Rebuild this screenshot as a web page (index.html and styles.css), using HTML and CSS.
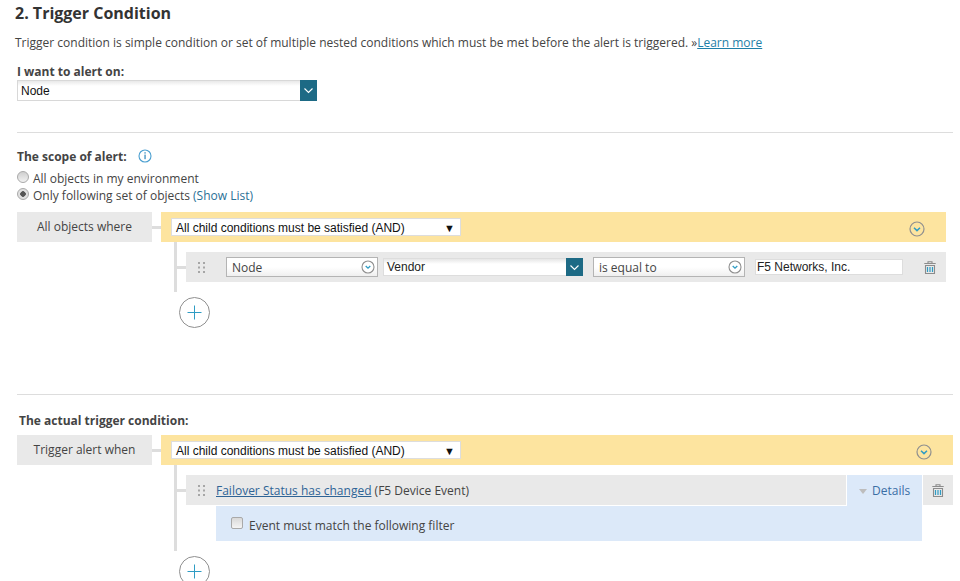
FILE: index.html
```html
<!DOCTYPE html>
<html lang="en">
<head>
<meta charset="utf-8">
<title>Trigger Condition</title>
<link rel="stylesheet" href="styles.css">
</head>
<body>
<main class="page">
  <h2 class="title">2. Trigger Condition</h2>
  <p class="intro">Trigger condition is simple condition or set of multiple nested conditions which must be met before the alert is triggered. »<a class="link" href="#">Learn more</a></p>

  <div class="label label-alert">I want to alert on:</div>
  <div class="alert-select">
    <div class="alert-value">Node</div>
    <div class="drop-btn drop-btn-alert"><svg width="11" height="7" viewBox="0 0 11 7"><path d="M1.5 1.5 5.5 5.5 9.5 1.5" fill="none" stroke="#fff" stroke-width="1.1"/></svg></div>
  </div>

  <hr class="rule rule-first">

  <div class="label label-scope">The scope of alert:
    <svg class="info" width="14" height="14" viewBox="0 0 14 14"><circle cx="7" cy="7" r="6" fill="none" stroke="#4a9fd0" stroke-width="1.1"/><rect x="6.4" y="3.2" width="1.3" height="1.4" fill="#3b8fc0"/><rect x="6.4" y="5.6" width="1.3" height="4.6" fill="#3b8fc0"/></svg>
  </div>
  <label class="radio-row radio-first"><input class="radio" type="radio" name="scope">All objects in my environment</label>
  <label class="radio-row"><input class="radio" type="radio" name="scope" checked>Only following set of objects <a class="show-list" href="#">(Show List)</a></label>

  <section class="group group-narrow">
    <div class="head">
      <div class="head-label">All objects where</div>
      <div class="head-link"></div>
      <div class="head-bar">
        <div class="and-select"><span>All child conditions must be satisfied (AND)</span><span class="and-arrow">▼</span></div>
        <svg class="bar-chevron" width="16" height="16" viewBox="0 0 16 16"><circle cx="8" cy="8" r="7" fill="none" stroke="#8f8f8f" stroke-width="1.2"/><path d="M5 6.8 8 9.6 11 6.8" fill="none" stroke="#2f9cc4" stroke-width="1.5"/></svg>
      </div>
    </div>
    <div class="tree">
      <div class="tree-row cond-row">
        <svg class="handle" width="7" height="11" viewBox="0 0 7 11"><path d="M0 0h2v2H0zM5 0h2v2H5zM0 4.500h2v2H0zM5 4.500h2v2H5zM0 9h2v2H0zM5 9h2v2H5z" fill="#a6a6a6"/></svg>
        <div class="fancy-select fancy-first"><span>Node</span><svg width="14" height="14" viewBox="0 0 14 14"><circle cx="7" cy="7" r="6" fill="#fff" stroke="#8f8f8f" stroke-width="1.1"/><path d="M4.700 6 7 8.200 9.300 6" fill="none" stroke="#2f9cc4" stroke-width="1.3"/></svg></div>
        <div class="vendor-select">
          <div class="vendor-value">Vendor</div>
          <div class="drop-btn drop-btn-vendor"><svg width="11" height="7" viewBox="0 0 11 7"><path d="M1.500 1.500 5.500 5.500 9.500 1.500" fill="none" stroke="#fff" stroke-width="1.1"/></svg></div>
        </div>
        <div class="fancy-select fancy-op"><span>is equal to</span><svg width="14" height="14" viewBox="0 0 14 14"><circle cx="7" cy="7" r="6" fill="#fff" stroke="#8f8f8f" stroke-width="1.1"/><path d="M4.700 6 7 8.200 9.300 6" fill="none" stroke="#2f9cc4" stroke-width="1.3"/></svg></div>
        <input class="value-input" type="text" value="F5 Networks, Inc.">
        <svg class="trash trash-row" width="12" height="13" viewBox="0 0 12 13"><path d="M4 2V.7h4V2M.3 2.500h11.400M1.500 4.500h9v8h-9z" fill="none" stroke="#8c8c8c" stroke-width="1.1"/><path d="M3.500 6v5M6 6v5M8.500 6v5" stroke="#2f9cc4" stroke-width="1.200"/></svg>
      </div>
    </div>
    <button class="plus" type="button" aria-label="Add"><svg width="31" height="31" viewBox="0 0 31 31"><circle cx="15.500" cy="15.500" r="15" fill="#fff" stroke="#8f8f8f" stroke-width="1"/><path d="M15.500 8.500v14M8.500 15.500h14" stroke="#2f9cc4" stroke-width="1"/></svg></button>
  </section>

  <hr class="rule rule-second">

  <div class="label label-actual">The actual trigger condition:</div>

  <section class="group">
    <div class="head">
      <div class="head-label">Trigger alert when</div>
      <div class="head-link"></div>
      <div class="head-bar">
        <div class="and-select"><span>All child conditions must be satisfied (AND)</span><span class="and-arrow">▼</span></div>
        <svg class="bar-chevron" width="16" height="16" viewBox="0 0 16 16"><circle cx="8" cy="8" r="7" fill="none" stroke="#8f8f8f" stroke-width="1.2"/><path d="M5 6.800 8 9.600 11 6.800" fill="none" stroke="#2f9cc4" stroke-width="1.500"/></svg>
      </div>
    </div>
    <div class="tree">
      <div class="tree-row event-row">
        <div class="event-main">
          <svg class="handle handle-event" width="7" height="11" viewBox="0 0 7 11"><path d="M0 0h2v2H0zM5 0h2v2H5zM0 4.500h2v2H0zM5 4.500h2v2H5zM0 9h2v2H0zM5 9h2v2H5z" fill="#a6a6a6"/></svg>
          <a class="event-link" href="#">Failover Status has changed</a>&nbsp;(F5 Device Event)
        </div>
        <div class="details"><span class="details-arrow"></span>Details</div>
        <div class="event-trash">
          <svg class="trash" width="12" height="13" viewBox="0 0 12 13"><path d="M4 2V.7h4V2M.3 2.500h11.400M1.500 4.500h9v8h-9z" fill="none" stroke="#8c8c8c" stroke-width="1.100"/><path d="M3.500 6v5M6 6v5M8.500 6v5" stroke="#2f9cc4" stroke-width="1.200"/></svg>
        </div>
      </div>
      <label class="filter"><input class="check" type="checkbox">Event must match the following filter</label>
    </div>
    <button class="plus" type="button" aria-label="Add"><svg width="31" height="31" viewBox="0 0 31 31"><circle cx="15.500" cy="15.500" r="15" fill="#fff" stroke="#8f8f8f" stroke-width="1"/><path d="M15.500 8.500v14M8.500 15.500h14" stroke="#2f9cc4" stroke-width="1"/></svg></button>
  </section>
</main>
</body>
</html>
```

FILE: styles.css
```css
* { box-sizing: border-box; }

html, body {
  margin: 0;
  height: 581px;
  overflow: hidden;
  background: #fff;
}

body {
  font-family: "Open Sans", sans-serif;
  font-size: 12px;
  color: #444;
}

.page {
  padding: 0 7px 0 17px;
}

.title {
  margin: 0 0 0 -2px;
  font-size: 16px;
  font-weight: 700;
  line-height: 26px;
  color: #333;
}

.intro {
  margin: 9px 0 0 -2px;
  line-height: 16px;
  white-space: nowrap;
}

.link { color: #1f7fa8; }

.label {
  font-weight: 700;
  line-height: 16px;
  color: #444;
}

.label-alert { margin-top: 13px; }

.alert-select {
  display: flex;
  width: 300px;
  height: 21px;
  font-family: "Liberation Sans", Arial, sans-serif;
  color: #111;
}

.alert-value {
  flex: 1;
  padding: 0 3px;
  line-height: 20px;
  border: 1px solid #d8d8d8;
  border-right: 0;
  background: linear-gradient(#e9e9e9, #fff 5px);
}

.drop-btn {
  display: flex;
  align-items: center;
  justify-content: center;
  width: 17px;
  background: #1d6a85;
}

.rule {
  height: 1px;
  margin: 0;
  border: 0;
  background: #ddd;
}

.rule-first { margin-top: 31px; }
.rule-second { margin-top: 66px; }

.label-scope {
  display: flex;
  align-items: center;
  gap: 11px;
  margin-top: 16px;
}

.info { margin-top: -2px; }

.radio-row {
  display: flex;
  align-items: center;
  gap: 4px;
  height: 17px;
}

.radio-first { margin-top: 5px; }

.radio {
  appearance: none;
  width: 12px;
  height: 12px;
  margin: -3px 0 0;
  flex: none;
  border: 1px solid #a9a9a9;
  border-radius: 50%;
  background: linear-gradient(#cfcfcf, #f2f2f2);
}

.radio:checked {
  background: radial-gradient(circle, #555 0 2.5px, #e0e0e0 3px);
}

.show-list {
  margin-left: -1px;
  color: #2a7096;
  text-decoration: none;
}

.group { margin-top: 8px; }
.group-narrow { margin-right: 7px; }

.head {
  display: flex;
  height: 30px;
}

.head-label {
  width: 135px;
  line-height: 30px;
  text-align: center;
  background: #e9e9e9;
}

.head-link {
  width: 9px;
  height: 3px;
  margin-top: 14px;
  background: #ddd;
}

.head-bar {
  flex: 1;
  display: flex;
  align-items: center;
  justify-content: space-between;
  padding: 0 21px 0 10px;
  background: #fde49f;
}

.and-select {
  display: flex;
  justify-content: space-between;
  align-items: center;
  width: 290px;
  height: 18px;
  padding: 1px 5px 0 4px;
  border: 1px solid #ddd;
  background: #fff;
  font-family: "Liberation Sans", Arial, sans-serif;
  color: #111;
}

.and-arrow { font-size: 11px; color: #111; }

.bar-chevron { margin-top: 3px; }

.tree {
  margin-left: 157px;
  padding: 10px 0 10px 9px;
  border-left: 3px solid #ddd;
}

.tree-row { position: relative; }

.tree-row::before {
  content: "";
  position: absolute;
  left: -9px;
  top: 14px;
  width: 9px;
  height: 3px;
  background: #ddd;
}

.cond-row {
  display: flex;
  align-items: center;
  height: 30px;
  padding: 0 10px 0 12px;
  background: #e9e9e9;
}

.handle { flex: none; }

.cond-row .handle { margin-right: 21px; }

.fancy-select {
  display: flex;
  align-items: center;
  justify-content: space-between;
  width: 152px;
  height: 20px;
  padding: 0 2px 0 5px;
  border: 1px solid #b4b4b4;
  background: linear-gradient(#fff 50%, #efefef);
}

.vendor-select {
  display: flex;
  height: 18px;
  width: 200px;
  margin-left: 5px;
  font-family: "Liberation Sans", Arial, sans-serif;
  color: #222;
}

.vendor-value {
  flex: 1;
  padding: 0 3px;
  line-height: 16px;
  border: 1px solid #ddd;
  border-right: 0;
  background: linear-gradient(#e6e6e6, #fff 5px);
}

.fancy-op { margin-left: 10px; }

.value-input {
  width: 148px;
  height: 16px;
  margin-left: 10px;
  padding: 0 1px;
  border: 1px solid #ddd;
  border-radius: 0;
  outline: 0;
  background: #fff;
  font: 12px "Liberation Sans", Arial, sans-serif;
  color: #222;
}

.trash { display: block; flex: none; }
.trash-row { margin-left: auto; margin-right: 0; }

.plus {
  display: block;
  width: 31px;
  height: 31px;
  margin: 5px 0 0 162px;
  padding: 0;
  border: 0;
  background: none;
}

.plus svg { display: block; }

.event-row {
  display: flex;
  align-items: flex-start;
  height: 31px;
}

.event-main {
  flex: 1;
  display: flex;
  align-items: center;
  height: 30px;
  padding-left: 12px;
  background: #e9e9e9;
}

.handle-event { margin-right: 11px; }

.event-link { color: #2f6496; }

.details {
  display: flex;
  align-items: center;
  width: 75px;
  height: 31px;
  margin-left: 1px;
  padding: 0 0 1px 12px;
  background: #dce9f9;
  color: #3a6ea5;
}

.details-arrow {
  width: 0;
  height: 0;
  margin: 2px 5px 0 0;
  border-style: solid;
  border-width: 5px 4.500px 0;
  border-color: #bdbdbd transparent transparent;
}

.event-trash {
  display: flex;
  align-items: center;
  justify-content: center;
  width: 30px;
  height: 30px;
  margin-left: 1px;
  background: #e9e9e9;
}

.filter {
  display: flex;
  align-items: center;
  gap: 6px;
  width: 706px;
  height: 35px;
  margin-left: 30px;
  padding: 4px 0 0 15px;
  background: #dce9f9;
}

.check {
  appearance: none;
  width: 12px;
  height: 12px;
  margin: -5px 0 0;
  border: 1px solid #a9a9a9;
  border-radius: 2px;
  background: linear-gradient(#d9d9d9, #f4f4f4);
}

.label-actual { margin: 18px 0 0 2px; }
.label-actual + .group { margin-top: 6px; }
```
